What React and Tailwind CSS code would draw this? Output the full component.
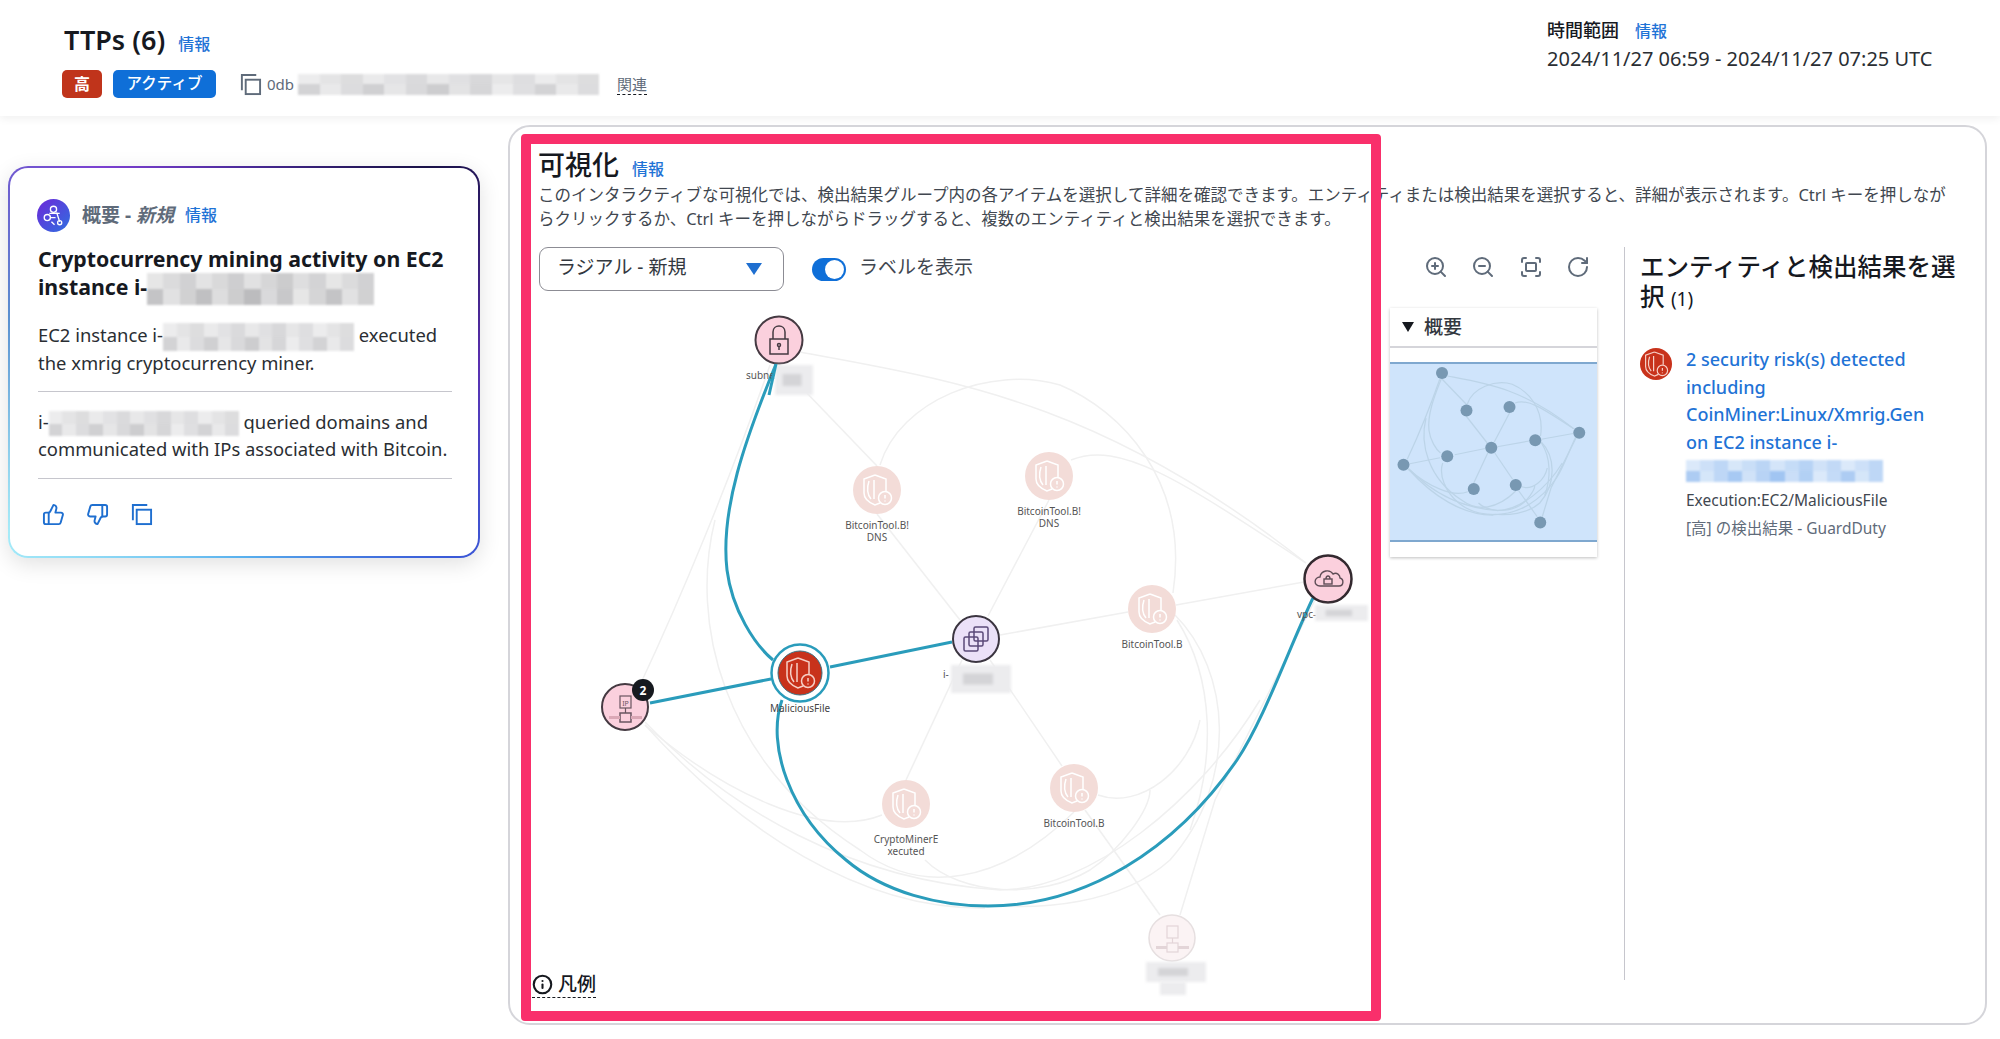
import React from 'react';
import { ZoomIn, ZoomOut, Fullscreen, RotateCw, ThumbsUp, ThumbsDown, Info } from 'lucide-react';

const EDGES = [
  'M800 352 C950 380 1100 400 1306 563',
  'M779 364 L877 466',
  'M1071 460 C1120 440 1180 480 1306 563',
  'M880 465 C900 400 990 365 1060 385 C1120 410 1190 480 1173 593',
  'M1177 620 C1215 680 1215 760 1190 830',
  'M1175 615 C1230 670 1240 780 1170 860 C1120 905 1040 910 985 905',
  'M640 685 C680 600 730 480 770 365',
  'M645 725 C720 790 820 840 882 815',
  'M645 725 C740 830 860 910 985 908',
  'M645 722 C730 810 850 880 1000 890 C1090 890 1200 800 1260 700',
  'M715 520 C690 620 720 760 860 850 C920 895 1000 885 1074 812',
  'M1085 810 L1160 915',
  'M1180 915 L1215 800 C1250 730 1290 650 1315 600',
  'M1098 795 C1140 810 1190 770 1200 720',
  'M925 860 C960 895 1040 900 1090 870 C1120 850 1150 810 1150 790',
  'M960 620 L877 514',
  'M988 616 L1049 500',
  'M1000 635 L1128 612',
  'M1176 605 L1304 582',
  'M962 660 L906 780',
  'M990 660 L1062 766',
];

const SELECTED = [
  'M776 364 C745 440 720 510 727 570 C732 610 755 645 773 660',
  'M830 667 L952 642',
  'M771 679 L650 703',
  'M782 700 C766 745 790 815 846 860 C885 893 940 906 988 906 C1085 906 1175 850 1237 760 C1265 718 1290 645 1313 598',
];

const MINI_NODES = [[779, 340], [877, 490], [1049, 476], [1152, 609], [1328, 579], [976, 639], [800, 673], [625, 707], [906, 804], [1074, 788], [1172, 938]];

const InfoLink = ({ className = '' }) => (
  <span className={`text-[16px] font-medium text-[#1f73d6] ${className}`}>情報</span>
);

// pixelated redaction block
const Redacted = ({ className = '', tone = '#8b8b8f' }) => (
  <span className={`inline-flex flex-col align-middle overflow-hidden blur-[1px] ${className}`}>
    {[0, 1].map(row => (
      <span key={row} className="flex flex-1">
        {Array.from({ length: 14 }).map((_, i) => (
          <span key={i} className="flex-1" style={{ backgroundColor: tone, opacity: 0.22 + ((i * 37 + row * 19) % 11) / (row ? 28 : 45) }} />
        ))}
      </span>
    ))}
  </span>
);

const CopyIcon = ({ className = '' }) => (
  <svg viewBox="0 0 24 24" fill="none" stroke="currentColor" strokeWidth="2" className={className}>
    <rect x="7" y="7" width="15" height="15" />
    <path d="M3 18V2h15" />
  </svg>
);

const ShieldGlyph = ({ x, y, color = '#fff', scale = 1 }) => (
  <g transform={`translate(${x} ${y}) scale(${scale})`} fill="none" stroke={color} strokeWidth="1.5">
    <path d="M-2 -15 L9 -11 V1 M-2 -15 L-13 -11 V3 C-13 9 -7 13 -2 15 L3 13" />
    <path d="M-8 -9 C-10 -3 -10 4 -6 9 M-3 -10 V9" />
    <circle cx="8" cy="8" r="6.5" />
    <path d="M8 5 V8.5 M8 10.5 V11.5" />
  </g>
);

const FindingNode = ({ x, y, lines }) => (
  <g>
    <circle cx={x} cy={y} r="24" fill="#f3dcd8" />
    <ShieldGlyph x={x} y={y} />
    {lines.map((line, i) => (
      <text key={line} x={x} y={y + 39 + i * 12} textAnchor="middle" fontSize="10" fill="#555">{line}</text>
    ))}
  </g>
);

const GraphBlur = ({ x, y, w, h }) => (
  <g className="blur-[1.5px]">
    <rect x={x} y={y} width={w} height={h} fill="#ececee" />
    <rect x={x + w * 0.2} y={y + h * 0.3} width={w * 0.5} height={h * 0.4} fill="#d4d4d7" />
  </g>
);

const Graph = () => (
  <svg viewBox="538 300 832 708" className="block w-[832px] h-[708px]">
    <g fill="none" stroke="#f0f0f0" strokeWidth="1.5">
      {EDGES.map(d => <path key={d} d={d} />)}
    </g>
    <g fill="none" stroke="#2a9cbb" strokeWidth="3">
      {SELECTED.map(d => <path key={d} d={d} />)}
    </g>

    {/* subnet */}
    <circle cx="779" cy="340" r="23.5" fill="#fbd0dd" stroke="#453a42" strokeWidth="2" />
    <g fill="none" stroke="#453a42" strokeWidth="1.5">
      <rect x="770" y="339" width="18" height="15" />
      <path d="M773 339 V332 C773 324 785 324 785 332 V339" />
      <circle cx="779" cy="345" r="1.5" />
      <path d="M779 347 V350" />
    </g>
    <text x="746" y="379" fontSize="10" fill="#555">subne</text>
    <GraphBlur x={775} y={365} w={38} h={30} />
    <path d="M776 364 L769 395" stroke="#2a9cbb" strokeWidth="3" />

    <FindingNode x={877} y={490} lines={['BitcoinTool.B!', 'DNS']} />
    <FindingNode x={1049} y={476} lines={['BitcoinTool.B!', 'DNS']} />
    <FindingNode x={1152} y={609} lines={['BitcoinTool.B']} />
    <FindingNode x={906} y={804} lines={['CryptoMinerE', 'xecuted']} />
    <FindingNode x={1074} y={788} lines={['BitcoinTool.B']} />

    {/* vpc */}
    <circle cx="1328" cy="579" r="23.5" fill="#fbd0dd" stroke="#33292f" strokeWidth="2.5" />
    <g fill="none" stroke="#5f4d57" strokeWidth="1.4">
      <path d="M1320 586 C1313 586 1314 577 1320 577 C1321 570 1330 569 1333 574 C1337 572 1340 575 1340 578 C1344 579 1344 586 1339 586 Z" />
      <rect x="1324" y="579" width="8" height="5" />
      <path d="M1326 579 C1326 575 1330 575 1330 579" />
    </g>
    <text x="1297" y="618" fontSize="10" fill="#555">vpc-</text>
    <GraphBlur x={1315} y={605} w={53} h={16} />

    {/* instance */}
    <circle cx="976" cy="639" r="23" fill="#ebe1f8" stroke="#3b3540" strokeWidth="2" />
    <g fill="none" stroke="#5b4a78" strokeWidth="1.5">
      <rect x="964" y="637" width="14" height="14" rx="1.5" />
      <rect x="969" y="632" width="14" height="14" rx="1.5" />
      <rect x="974" y="627" width="14" height="14" rx="1.5" />
    </g>
    <text x="943" y="678" fontSize="10" fill="#555">i-</text>
    <GraphBlur x={951} y={665} w={60} h={28} />

    {/* selected finding */}
    <circle cx="800" cy="673" r="28.5" fill="#fff" stroke="#2a9cbb" strokeWidth="2.5" />
    <circle cx="800" cy="673" r="22" fill="#c8321b" stroke="#3a6f80" strokeWidth="1" />
    <ShieldGlyph x={800} y={673} color="#f6cfc6" />
    <text x="800" y="712" textAnchor="middle" fontSize="10" fill="#444">MaliciousFile</text>

    {/* ip node */}
    <circle cx="625" cy="707" r="23" fill="#fbd0dd" stroke="#453a42" strokeWidth="2" />
    <g fill="none" stroke="#6a5560" strokeWidth="1.2">
      <rect x="620" y="696" width="11" height="12" />
      <path d="M625.5 708 V713" />
      <rect x="620" y="713" width="11" height="9" strokeWidth="1.5" />
      <path d="M609 717.5 H620 M631 717.5 H642" strokeWidth="3" stroke="#dba8b6" />
    </g>
    <text x="625.5" y="706" textAnchor="middle" fontSize="7" fill="#6a5560">IP</text>
    <circle cx="643" cy="690" r="11" fill="#16191f" />
    <text x="643" y="694.5" textAnchor="middle" fontSize="12" fontWeight="700" fill="#fff">2</text>

    {/* faded public ip */}
    <circle cx="1172" cy="938" r="23" fill="#fbf3f4" stroke="#e6dfe0" strokeWidth="1.5" />
    <g fill="none" stroke="#e3d5d8" strokeWidth="1.2">
      <rect x="1167" y="926" width="11" height="12" />
      <path d="M1172.5 938 V943" />
      <rect x="1167" y="943" width="11" height="9" />
      <path d="M1156 947.5 H1167 M1178 947.5 H1189" strokeWidth="3" />
    </g>
    <GraphBlur x={1146} y={962} w={60} h={20} />
    <rect x="1160" y="982" width="26" height="13" fill="#ececee" className="blur-[1.5px]" />
  </svg>
);

const MiniMap = () => (
  <svg viewBox="1390 362 207 180" className="block w-[207px] h-[180px]">
    <g transform="translate(1442 373) scale(0.25) translate(-779 -340)">
      <g fill="none" stroke="#bcd4e8" strokeWidth="5">
        {EDGES.map(d => <path key={d} d={d} />)}
        {SELECTED.map(d => <path key={d} d={d} />)}
      </g>
      {MINI_NODES.map(([x, y]) => <circle key={x} cx={x} cy={y} r="24" fill="#7898b2" />)}
    </g>
  </svg>
);

const App = () => {
  return (
    <div className="w-[2000px] h-[1039px] overflow-hidden bg-white text-[#16191f] font-['Noto_Sans','Noto_Sans_CJK_JP',sans-serif]">
      {/* page header */}
      <div className="h-[116px] flex justify-between pl-[62px] pt-[22px] pr-[68px] shadow-[0_3px_8px_rgba(0,0,0,0.06)]">
        <div>
          <div className="flex items-baseline gap-[13px] pl-[2px] h-[36px]">
            <h1 className="text-[27px] leading-[36px] font-semibold">TTPs (6)</h1>
            <InfoLink />
          </div>
          <div className="flex items-center mt-[12px] h-[28px]">
            <span className="w-[40px] h-[28px] rounded-[5px] bg-[#c0341b] text-white text-[16px] font-semibold flex items-center justify-center">高</span>
            <span className="ml-[11px] w-[103px] h-[28px] rounded-[5px] bg-[#0f6fd8] text-white text-[15.5px] font-medium flex items-center justify-center">アクティブ</span>
            <CopyIcon className="ml-[23px] w-[23px] h-[23px] text-[#5f6b7a]" />
            <span className="ml-[5px] text-[15px] text-[#5f6b7a] w-[31px]">0db</span>
            <Redacted className="w-[301px] h-[21px]" tone="#a8a8ac" />
            <span className="ml-[18px] text-[15px] text-[#5f6b7a] border-b border-dashed border-[#16191f] leading-[20px]">関連</span>
          </div>
        </div>
        <div className="w-[385px] -mt-[4px]">
          <div className="flex items-baseline gap-[16px] h-[24px]">
            <span className="text-[18px] leading-[24px] font-medium">時間範囲</span>
            <InfoLink />
          </div>
          <div className="text-[20px] leading-[26px] mt-[4px] whitespace-nowrap text-[#2a2e33]">2024/11/27 06:59 - 2024/11/27 07:25 UTC</div>
        </div>
      </div>

      <div className="flex">
        {/* summary card */}
        <div className="w-[508px] pl-[8px] pt-[50px]">
          <div className="w-[472px] h-[392px] rounded-[20px] p-[2px] bg-[conic-gradient(from_0deg,#4b2a9a,#1a1248_12%,#5a2fb0_25%,#3a5ad8_37%,#58b0ee_50%,#a6ebf8_65%,#5a90d0_78%,#7b3fd0_90%,#4b2a9a)] shadow-[0_6px_22px_rgba(0,0,0,0.12)]">
            <div className="h-full rounded-[18px] bg-white pl-[28px] pr-[26px] pt-[31px]">
              <div className="flex items-center h-[32px]">
                <svg viewBox="0 0 32 32" className="w-[33px] h-[33px] -ml-[1px]">
                  <defs>
                    <linearGradient id="avatarFill" x1="0" y1="0" x2="1" y2="1">
                      <stop offset="0" stopColor="#6d28d9" />
                      <stop offset="1" stopColor="#2f6fe0" />
                    </linearGradient>
                  </defs>
                  <circle cx="16" cy="16" r="16" fill="url(#avatarFill)" />
                  <g fill="none" stroke="#fff" strokeWidth="1.3">
                    <circle cx="16" cy="10" r="3" />
                    <circle cx="10" cy="18" r="3" />
                    <path d="M12 14 H22 M19 13 L22 22 M13 18 H18 M14 22 L17 25" />
                    <circle cx="22" cy="23" r="2" />
                  </g>
                </svg>
                <span className="ml-[12px] text-[19px] font-bold text-[#5f6b7a]">概要 - <em>新規</em></span>
                <InfoLink className="ml-[11px]" />
              </div>
              <h2 className="mt-[14px] text-[21.3px] leading-[28px] font-bold whitespace-nowrap">
                Cryptocurrency mining activity on EC2<br />
                instance i-<Redacted className="w-[227px] h-[32px] -my-[4px]" />
              </h2>
              <p className="mt-[20px] text-[18.4px] leading-[27.5px] whitespace-nowrap text-[#2a2e33]">
                EC2 instance i-<Redacted className="w-[191px] h-[28px] -my-[2px]" tone="#a8a8ac" /> executed<br />
                the xmrig cryptocurrency miner.
              </p>
              <div className="mt-[14px] h-px bg-[#c6c6cd]" />
              <p className="mt-[16px] text-[18.4px] leading-[27.5px] whitespace-nowrap text-[#2a2e33]">
                i-<Redacted className="w-[190px] h-[25px] -my-[2px]" tone="#a8a8ac" /> queried domains and<br />
                communicated with IPs associated with Bitcoin.
              </p>
              <div className="mt-[15px] h-px bg-[#c6c6cd]" />
              <div className="flex gap-[21px] mt-[24px] pl-[4px] text-[#1f6fd0]">
                <ThumbsUp className="w-[23px] h-[23px]" />
                <ThumbsDown className="w-[23px] h-[23px]" />
                <CopyIcon className="w-[23px] h-[23px]" />
              </div>
            </div>
          </div>
        </div>

        {/* visualization panel */}
        <div className="relative mt-[9px] w-[1479px] h-[900px] rounded-[22px] border-2 border-[#d5d5da] pl-[28px] pt-[20px]">
          <div className="flex items-baseline gap-[13px] h-[36px]">
            <h2 className="text-[27px] leading-[36px] font-medium">可視化</h2>
            <InfoLink />
          </div>
          <p className="w-[1420px] text-[16.5px] leading-[23.5px] text-[#414750]">
            このインタラクティブな可視化では、検出結果グループ内の各アイテムを選択して詳細を確認できます。エンティティまたは検出結果を選択すると、詳細が表示されます。Ctrl キーを押しながらクリックするか、Ctrl キーを押しながらドラッグすると、複数のエンティティと検出結果を選択できます。
          </p>

          <div className="flex mt-[16px]">
            <div className="relative w-[832px]">
              <div className="flex items-center h-[44px] mt-[1px] pl-px">
                <div className="w-[245px] h-[44px] rounded-[9px] border border-[#8c8c94] pl-[17px] pr-[21px] pb-[3px] flex items-center justify-between">
                  <span className="text-[19px] text-[#33383f]">ラジアル - 新規</span>
                  <span className="mt-[3px] w-0 h-0 border-x-[8px] border-x-transparent border-t-[12px] border-t-[#1f6fd0]" />
                </div>
                <div className="relative ml-[28px] w-[34px] h-[23px] rounded-full bg-[#0f6fd8]">
                  <span className="absolute right-[2px] top-[2px] w-[19px] h-[19px] rounded-full bg-white" />
                </div>
                <span className="ml-[13px] pb-[3px] text-[19px] text-[#414750]">ラベルを表示</span>
              </div>
              <div className="mt-[9px]">
                <Graph />
              </div>
              <div className="absolute left-[-6px] bottom-[10px] flex items-center gap-[5px] border-b border-dashed border-[#16191f] h-[26px] text-[19px] font-medium">
                <Info className="w-[21px] h-[21px]" strokeWidth={2.4} />
                <span>凡例</span>
              </div>
            </div>

            {/* zoom controls and overview */}
            <div className="w-[207px] ml-[20px]">
              <div className="flex gap-[23.5px] justify-end pr-[7px] pt-[9px] h-[62px] text-[#5f6b7a]">
                <ZoomIn className="w-[24px] h-[24px]" />
                <ZoomOut className="w-[24px] h-[24px]" />
                <Fullscreen className="w-[24px] h-[24px]" />
                <RotateCw className="w-[24px] h-[24px]" />
              </div>
              <div className="h-[249px] bg-white shadow-[0_1px_3px_rgba(0,0,0,0.25)]">
                <div className="h-[40px] flex items-center gap-[10px] pl-[12px] border-b-2 border-[#d5d5da]">
                  <span className="w-0 h-0 border-x-[6px] border-x-transparent border-t-[10px] border-t-[#16191f]" />
                  <span className="text-[19px] font-medium text-[#33383f]">概要</span>
                </div>
                <div className="mt-[14px] h-[180px] bg-[#cfe4fb] border-y-2 border-[#7fa8cf] overflow-hidden">
                  <div className="-mt-[2px]">
                    <MiniMap />
                  </div>
                </div>
              </div>
            </div>

            <div className="ml-[27px] mt-[1px] w-px h-[733px] bg-[#c6c6cd]" />

            {/* selection details */}
            <div className="pl-[15px] w-[330px]">
              <h3 className="text-[24.5px] leading-[30px] font-medium pt-[6px] whitespace-nowrap">
                エンティティと検出結果を選<br />
                択 <span className="text-[19px] font-normal">(1)</span>
              </h3>
              <div className="flex mt-[33px]">
                <svg viewBox="-16 -16 32 32" className="w-[32px] h-[34px] shrink-0">
                  <circle r="16" fill="#c8321b" />
                  <ShieldGlyph x={0} y={0} color="#f6cfc6" scale={0.8} />
                </svg>
                <div className="ml-[14px] -mt-[1px]">
                  <div className="text-[18px] leading-[27.5px] font-medium text-[#1f73d6] w-[240px]">
                    2 security risk(s) detected including CoinMiner:Linux/Xmrig.Gen on EC2 instance i-
                    <Redacted className="block w-[197px] h-[22px] my-[3px]" tone="#5c9be8" />
                  </div>
                  <div className="mt-[2px] text-[15.5px] leading-[27.5px] text-[#414750] whitespace-nowrap">Execution:EC2/MaliciousFile</div>
                  <div className="text-[15.5px] leading-[27.5px] text-[#5f6b7a] whitespace-nowrap">[高] の検出結果 - GuardDuty</div>
                </div>
              </div>
            </div>
          </div>

          {/* highlight frame */}
          <div className="absolute left-[11px] top-[7px] w-[860px] h-[887px] rounded-[4px] border-[10px] border-[#f92f6b] pointer-events-none" />
        </div>
      </div>
    </div>
  );
};

export default App;
